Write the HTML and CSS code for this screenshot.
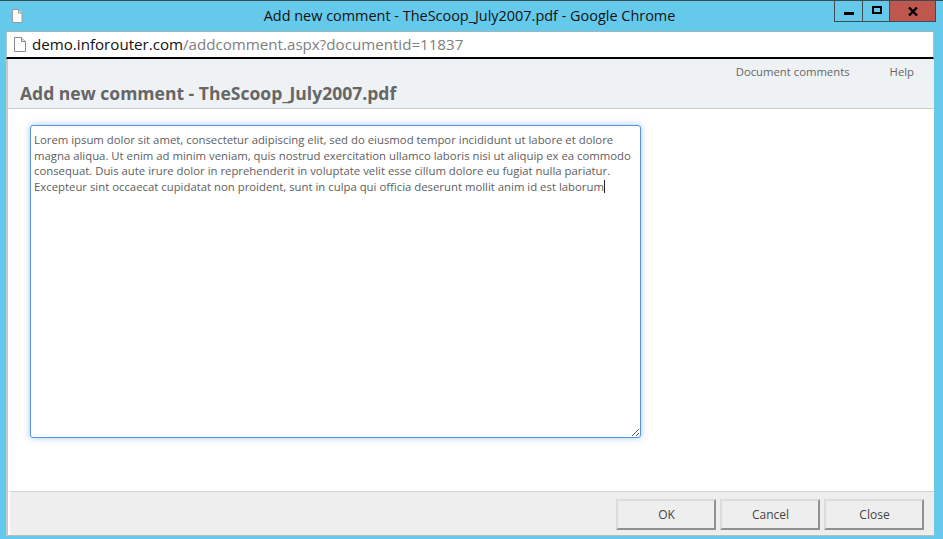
FILE: index.html
```html
<!DOCTYPE html>
<html lang="en">
<head>
<meta charset="utf-8">
<title>Add new comment - TheScoop_July2007.pdf</title>
<link rel="stylesheet" href="styles.css">
</head>
<body>
<div class="window">
  <div class="titlebar">
    <svg class="page-icon title-icon" width="12" height="14" viewBox="0 0 12 14"><path d="M1.5.5h6l3.500 3.500v9.500h-9.500z" fill="#fff" stroke="#9a9a9a"/><path d="M7.500.5v3.500h3.500" fill="#e4e4e4" stroke="#9a9a9a"/></svg>
    <div class="title">Add new comment - TheScoop_July2007.pdf - Google Chrome</div>
    <div class="controls">
      <div class="ctl ctl-min"><span class="glyph-min"></span></div>
      <div class="ctl ctl-max"><span class="glyph-max"></span></div>
      <div class="ctl ctl-close"><svg width="10" height="9" viewBox="0 0 10 9"><path d="M1 .5 L9 8.500 M9 .5 L1 8.500" stroke="#000" stroke-width="2.400" fill="none"/></svg></div>
    </div>
  </div>
  <div class="content-frame">
    <div class="urlbar">
      <svg class="page-icon" width="12" height="15" viewBox="0 0 12 15"><path d="M.5.5h7l4 4v10h-11z" fill="#fff" stroke="#8a8a8a"/><path d="M7.500.5v4h4" fill="#e4e4e4" stroke="#8a8a8a"/></svg>
      <div class="url"><span class="host">demo.inforouter.com</span>/addcomment.aspx?documentid=11837</div>
    </div>
    <div class="page">
      <header class="head">
        <nav class="nav"><a>Document comments</a><a>Help</a></nav>
        <h1>Add new comment - TheScoop_July2007.pdf</h1>
      </header>
      <main class="main">
        <div class="comment">Lorem ipsum dolor sit amet, consectetur adipiscing elit, sed do eiusmod tempor incididunt ut labore et dolore magna aliqua. Ut enim ad minim veniam, quis nostrud exercitation ullamco laboris nisi ut aliquip ex ea commodo consequat. Duis aute irure dolor in reprehenderit in voluptate velit esse cillum dolore eu fugiat nulla pariatur. Excepteur sint occaecat cupidatat non proident, sunt in culpa qui officia deserunt mollit anim id est laborum<span class="caret"></span></div>
      </main>
      <footer class="foot">
        <button class="btn">OK</button>
        <button class="btn">Cancel</button>
        <button class="btn">Close</button>
      </footer>
    </div>
  </div>
</div>
</body>
</html>
```
FILE: styles.css
```css
html, body { margin: 0; padding: 0; }
body { width: 943px; height: 539px; overflow: hidden; background: #65c9eb; font-family: "Open Sans", "Noto Sans", sans-serif; }
.window { height: 539px; display: flex; flex-direction: column; border-top: 1px solid #3b4a50; box-sizing: border-box; background: #65c9eb; }
.titlebar { height: 30px; flex: none; display: grid; grid-template-columns: 1fr auto 1fr; align-items: start; }
.title-icon { margin: 8px 0 0 11px; }
.title { font-size: 14.450px; line-height: 30px; color: #111; white-space: nowrap; padding-right: 4px; }
.controls { justify-self: end; display: flex; height: 21px; margin-right: 7px; border: 1px solid #3f4c52; border-top: 0; box-sizing: border-box; }
.ctl { display: flex; align-items: center; justify-content: center; height: 20px; box-sizing: border-box; }
.ctl-min { width: 28px; border-right: 1px solid #3f4c52; }
.ctl-max { width: 26px; }
.ctl-close { width: 46px; background: #c0574f; border-left: 1px solid #3f4c52; }
.glyph-min { width: 10px; height: 3px; background: #000; margin-top: 5px; }
.glyph-max { width: 6px; height: 4px; border: 2px solid #000; margin: -2px 0 0 1px; }
.content-frame { flex: 1; display: flex; flex-direction: column; margin: 0 9px 3px 6px; min-height: 0; }
.urlbar { height: 28px; flex: none; box-sizing: border-box; background: #fff; border: 1px solid #b5c4ca; border-bottom: 2px solid #000; border-top-color: #9fb6bf; display: flex; align-items: center; padding: 0 0 1px 7px; gap: 6px; }
.url { font-size: 15.130px; color: #808080; white-space: nowrap; }
.host { color: #111; }
.page { flex: 1; min-height: 0; display: flex; flex-direction: column; background: #fff; border-left: 2px solid #c8c8c8; border-bottom: 1px solid #bbb; padding-left: 2px; }
.head { height: 50px; flex: none; box-sizing: border-box; background: #eff2f5; border-bottom: 1px solid #ccc; margin-left: -2px; padding-left: 2px; }
.nav { display: flex; justify-content: flex-end; gap: 40px; padding: 5px 20px 0 0; font-size: 11.300px; line-height: 16px; color: #666; }
.head h1 { margin: 2px 0 0 10px; font-size: 17.550px; line-height: 22px; font-weight: 700; color: #666; white-space: nowrap; }
.main { flex: 1; min-height: 0; padding: 16px 0 0 20px; }
.comment { width: 611px; height: 313px; box-sizing: border-box; padding: 6px 3px; border: 1px solid #5a93dd; border-radius: 3px; box-shadow: 0 0 6px rgba(90,147,221,.55); font-size: 11.350px; line-height: 15.600px; color: #606060; background: #fff; overflow: hidden; resize: both; }
.caret { display: inline-block; width: 1px; height: 13px; background: #222; vertical-align: -2px; }
.foot { height: 44px; flex: none; box-sizing: border-box; background: #eee; border-top: 1px solid #d2d2d2; display: flex; justify-content: flex-end; gap: 4px; padding: 7px 10px 0 0; }
.btn { width: 100px; height: 31px; box-sizing: border-box; background: #eee; border: 2px solid; border-color: #dcdcdc #909090 #909090 #dcdcdc; font-family: "Open Sans", "Noto Sans", sans-serif; font-size: 12px; color: #444; padding: 0 0 0 1px; }
```
